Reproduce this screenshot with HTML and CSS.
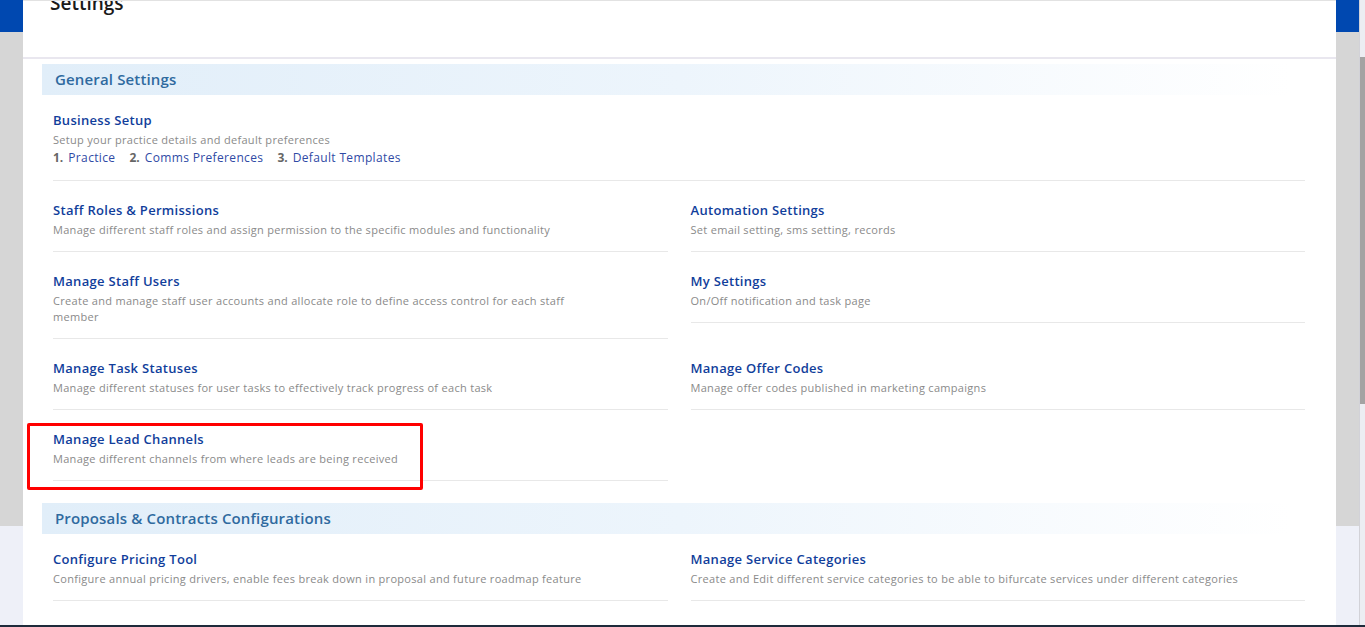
FILE: index.html
```html
<!DOCTYPE html>
<html lang="en">
<head>
  <meta charset="UTF-8">
  <meta name="viewport" content="width=device-width, initial-scale=1.0">
  <title>Settings</title>
  <link rel="stylesheet" href="styles.css">
</head>
<body>
  <div class="screen">
    <!-- Page behind the modal -->
    <div class="backdrop">
      <div class="modal">
        <div class="modal-header">
          <h2>Settings</h2>
        </div>

        <div class="modal-body">
          <!-- General Settings -->
          <div class="section-title">General Settings</div>
          <div class="section-items">
            <div class="setting">
              <a class="setting-title" href="#">Business Setup</a>
              <p class="setting-desc">Setup your practice details and default preferences</p>
              <ol class="steps">
                <li><span class="num">1.</span><a href="#">Practice</a></li>
                <li><span class="num">2.</span><a href="#">Comms Preferences</a></li>
                <li><span class="num">3.</span><a href="#">Default Templates</a></li>
              </ol>
            </div>

            <div class="setting-grid">
              <div class="setting">
                <a class="setting-title" href="#">Staff Roles &amp; Permissions</a>
                <p class="setting-desc">Manage different staff roles and assign permission to the specific modules and functionality</p>
              </div>
              <div class="setting">
                <a class="setting-title" href="#">Automation Settings</a>
                <p class="setting-desc">Set email setting, sms setting, records</p>
              </div>
              <div class="setting">
                <a class="setting-title" href="#">Manage Staff Users</a>
                <p class="setting-desc">Create and manage staff user accounts and allocate role to define access control for each staff member</p>
              </div>
              <div class="setting">
                <a class="setting-title" href="#">My Settings</a>
                <p class="setting-desc">On/Off notification and task page</p>
              </div>
              <div class="setting">
                <a class="setting-title" href="#">Manage Task Statuses</a>
                <p class="setting-desc">Manage different statuses for user tasks to effectively track progress of each task</p>
              </div>
              <div class="setting">
                <a class="setting-title" href="#">Manage Offer Codes</a>
                <p class="setting-desc">Manage offer codes published in marketing campaigns</p>
              </div>
              <div class="setting highlighted">
                <a class="setting-title" href="#">Manage Lead Channels</a>
                <p class="setting-desc">Manage different channels from where leads are being received</p>
              </div>
            </div>
          </div>

          <!-- Proposals & Contracts -->
          <div class="section-title">Proposals &amp; Contracts Configurations</div>
          <div class="section-items">
            <div class="setting-grid">
              <div class="setting">
                <a class="setting-title" href="#">Configure Pricing Tool</a>
                <p class="setting-desc">Configure annual pricing drivers, enable fees break down in proposal and future roadmap feature</p>
              </div>
              <div class="setting">
                <a class="setting-title" href="#">Manage Service Categories</a>
                <p class="setting-desc">Create and Edit different service categories to be able to bifurcate services under different categories</p>
              </div>
            </div>
          </div>
        </div>
      </div>
    </div>

    <!-- Scrollbar -->
    <div class="scrollbar">
      <div class="thumb"></div>
    </div>
  </div>
  <div class="bottom-edge"></div>
</body>
</html>
```

FILE: styles.css
```css
body {
  font-family: "Open Sans", Arial, sans-serif;
  margin: 0;
  padding: 0;
  height: 627px;
  overflow: hidden;
  color: #222;
}

.screen {
  display: flex;
  height: 625px;
}

/* Page behind the modal */
.backdrop {
  flex: 1;
  background: linear-gradient(to bottom, #0048b0 0, #0048b0 32px, #d6d6d6 32px, #d6d6d6 526px, #eef0f8 526px);
}

.modal {
  margin: 0 23px;
  height: 100%;
  background-color: #fff;
  border-top: 1px solid #e2e2e2;
  box-sizing: border-box;
  overflow: hidden;
}

.modal-header {
  display: flow-root;
  height: 56px;
  padding-left: 27px;
  border-bottom: 2px solid #e9e7ef;
}

.modal-header h2 {
  margin: -10px 0 0;
  font-size: 19px;
  font-weight: 600;
  line-height: 24px;
  color: #1a1a1a;
}

.modal-body {
  padding: 5px 19px 0;
}

/* Section headers */
.section-title {
  height: 31px;
  line-height: 31px;
  padding-left: 13px;
  font-size: 15px;
  font-weight: 600;
  letter-spacing: 0.15px;
  color: #2f6a9f;
  background: linear-gradient(to right, #e1eef9 0%, #edf5fc 50%, #ffffff 98%);
}

.section-items {
  padding: 15px 12px 0 11px;
  margin-bottom: 22px;
}

/* Setting items */
.setting {
  position: relative;
  padding-bottom: 13px;
  border-bottom: 1px solid #e8e8e8;
}

.section-items > .setting {
  padding-bottom: 14px;
  margin-bottom: 19px;
}

.setting-title {
  display: block;
  font-size: 13px;
  font-weight: 600;
  line-height: 20px;
  letter-spacing: 0.3px;
  color: #113e9b;
  text-decoration: none;
}

.setting-desc {
  margin: 2px 0 0;
  font-size: 11px;
  line-height: 16px;
  letter-spacing: 0.3px;
  color: #8a8a8a;
  max-width: 555px;
}

.steps {
  list-style: none;
  display: flex;
  gap: 14px;
  margin: 2px 0 0;
  padding: 0;
  font-size: 12px;
  line-height: 16px;
}

.steps .num {
  font-weight: 700;
  color: #666;
  margin-right: 5px;
}

.steps a {
  letter-spacing: 0.35px;
  color: #2f4aa5;
  text-decoration: none;
}

.setting-grid {
  display: grid;
  grid-template-columns: 1fr 1fr;
  column-gap: 23px;
  row-gap: 19px;
  align-items: start;
}

/* Red annotation box */
.highlighted::after {
  content: "";
  position: absolute;
  top: -6px;
  left: -26px;
  width: 396px;
  height: 67px;
  box-sizing: border-box;
  border: 3px solid #ff0000;
  border-radius: 2px;
}

/* Scrollbar */
.scrollbar {
  width: 6px;
  background-color: #eceef3;
  border-left: 1px solid #d2d2d8;
  box-sizing: border-box;
}

.thumb {
  margin-top: 57px;
  height: 347px;
  background-color: #a3a3a3;
}

.bottom-edge {
  height: 2px;
  background-color: #1e2b3b;
}
```
